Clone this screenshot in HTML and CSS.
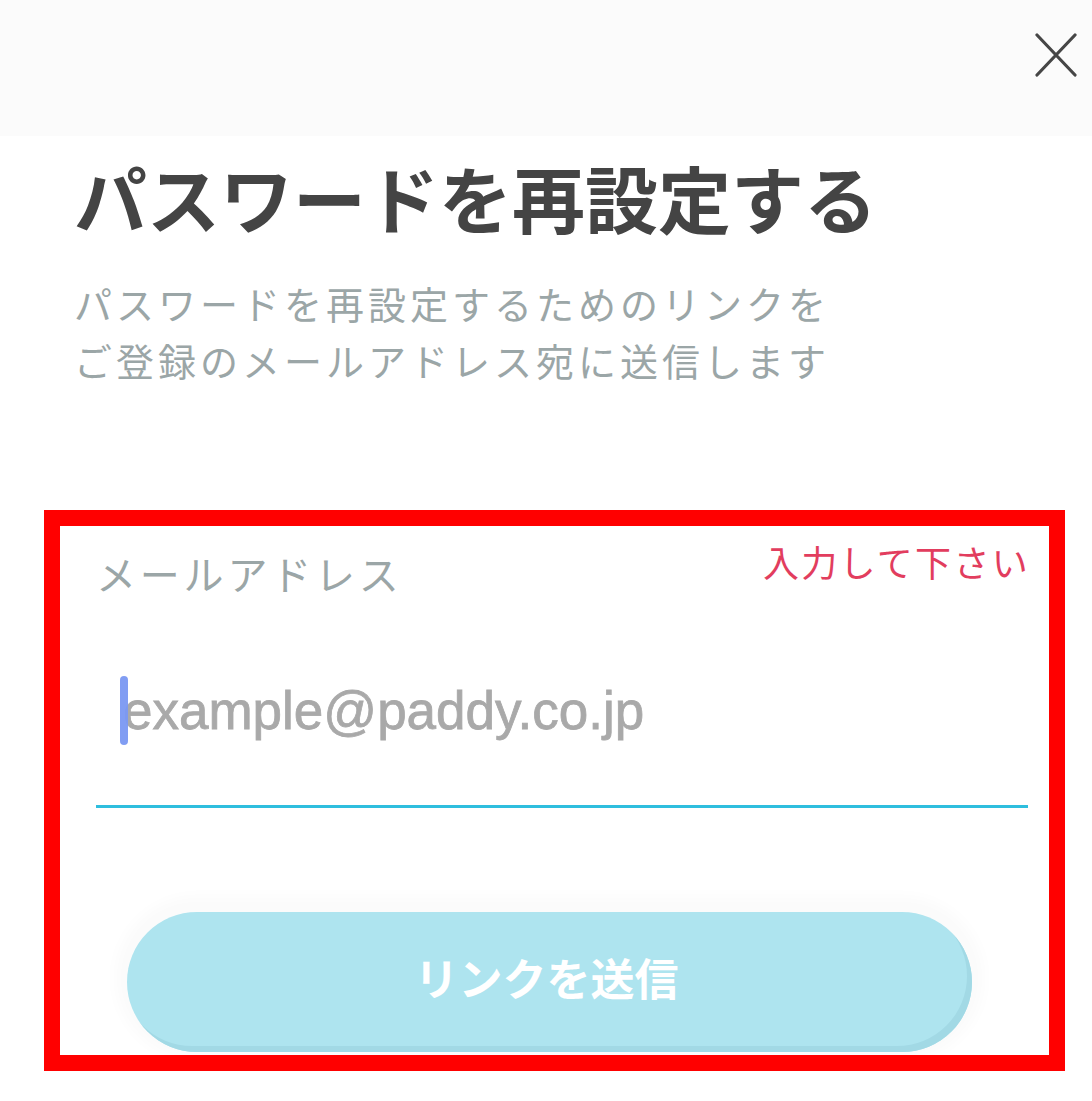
FILE: index.html
```html
<!DOCTYPE html>
<html lang="ja">
<head>
<meta charset="utf-8">
<title>パスワードを再設定する</title>
<link rel="stylesheet" href="styles.css">
</head>
<body>
<header class="topbar">
  <button class="close" aria-label="閉じる">
    <svg width="42" height="44" viewBox="0 0 42 44"><path d="M2 2 L40 42 M40 2 L2 42" stroke="#464646" stroke-width="3.2" stroke-linecap="round" fill="none"/></svg>
  </button>
</header>
<main class="content">
  <h1 class="title">パスワードを再設定する</h1>
  <p class="lead">パスワードを再設定するためのリンクを<br>ご登録のメールアドレス宛に送信します</p>
  <form class="form-box">
    <div class="field-head">
      <span class="label">メールアドレス</span>
      <span class="error">入力して下さい</span>
    </div>
    <div class="input-row">
      <span class="caret"></span><span class="placeholder">example@paddy.co.jp</span>
    </div>
    <div class="btn-wrap">
      <button type="button" class="submit">リンクを送信</button>
    </div>
  </form>
</main>
</body>
</html>
```
FILE: styles.css
```css
html, body {
  margin: 0;
  padding: 0;
  background: #ffffff;
}
body {
  width: 1092px;
  font-family: "Noto Sans CJK JP", "Noto Sans", sans-serif;
}
.topbar {
  height: 136px;
  background: #fbfbfb;
  display: flex;
  justify-content: flex-end;
  align-items: flex-start;
  padding: 33px 15px 0 0;
  box-sizing: border-box;
}
.close {
  border: 0;
  background: none;
  padding: 0;
  width: 42px;
  height: 44px;
  display: block;
}
.close svg { display: block; }
.content {
  padding: 0;
}
.title {
  margin: 17px 0 0 74px;
  font-size: 73px;
  line-height: 86px;
  font-weight: 700;
  color: #444444;
  letter-spacing: 0;
}
.lead {
  margin: 35px 0 0 74px;
  font-size: 38px;
  line-height: 57px;
  letter-spacing: 4px;
  color: #9ba6a7;
  font-weight: 400;
}
.form-box {
  margin: 122px 0 0 44px;
  width: 1021px;
  height: 561px;
  box-sizing: border-box;
  border: 16px solid #ff0000;
  padding: 0 21px 0 36px;
  overflow: hidden;
}
.field-head {
  display: flex;
  justify-content: space-between;
  align-items: flex-start;
  padding-top: 11px;
}
.label {
  margin-top: 12px;
  font-size: 40px;
  line-height: 48px;
  letter-spacing: 3.8px;
  color: #9ba6a7;
  padding-left: 0;
}
.error {
  font-size: 36px;
  line-height: 48px;
  letter-spacing: 2.3px;
  color: #e23d5e;
  margin-right: -2px;
}
.input-row {
  margin-top: 79px;
  height: 70px;
  padding: 0 0 59px 24px;
  border-bottom: 3px solid #2ebede;
  display: flex;
  align-items: flex-start;
}
.caret {
  display: block;
  width: 8px;
  height: 69px;
  border-radius: 4px;
  background: #7a98f2;
  margin-right: -5px;
  position: relative;
  z-index: 1;
  opacity: 0.95;
}
.placeholder {
  font-family: "Liberation Sans", Arial, sans-serif;
  font-size: 53px;
  line-height: 70px;
  color: #a9a9a9;
  -webkit-text-stroke: 0.8px #a9a9a9;
}
.btn-wrap {
  margin: 104px 0 0 31px;
  width: 845px;
}
.submit {
  display: block;
  width: 845px;
  height: 140px;
  border: 0;
  border-radius: 70px;
  background: #aee4ef;
  box-shadow: inset -5px -6px 0 #a2d9e5, 0 -4px 14px 12px #fbfbfb;
  color: #ffffff;
  font-family: "Noto Sans CJK JP", "Noto Sans", sans-serif;
  font-size: 44px;
  font-weight: 700;
  line-height: 130px;
  padding: 0 6px 10px 0;
  text-align: center;
  letter-spacing: 0;
}
```
